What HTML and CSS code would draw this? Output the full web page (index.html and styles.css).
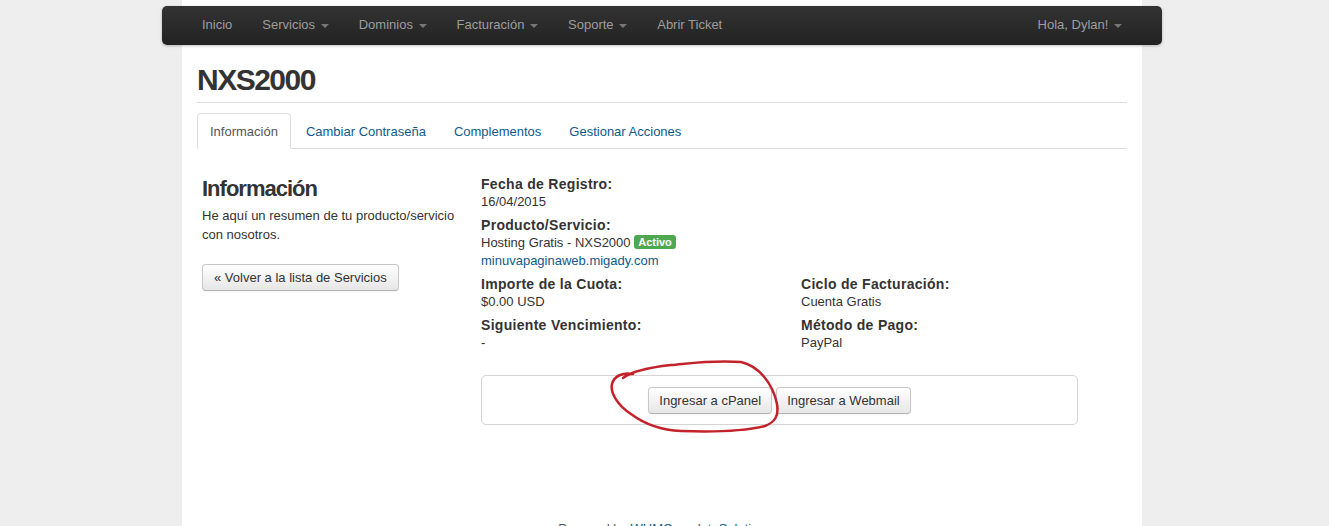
FILE: index.html
```html
<!DOCTYPE html>
<html>
<head>
    <meta charset="utf-8">
    <link rel="stylesheet" href="styles.css">
</head>
<body>
    <div class="page">
        <!-- Top Navigation -->
        <div class="navbar">
            <ul class="nav">
                <li><a href="#">Inicio</a></li>
                <li><a href="#">Servicios <span class="caret"></span></a></li>
                <li><a href="#">Dominios <span class="caret"></span></a></li>
                <li><a href="#">Facturación <span class="caret"></span></a></li>
                <li><a href="#">Soporte <span class="caret"></span></a></li>
                <li><a href="#">Abrir Ticket</a></li>
            </ul>
            <ul class="nav">
                <li><a href="#">Hola, Dylan! <span class="caret"></span></a></li>
            </ul>
        </div>

        <div class="content">
            <h1 class="page-title">NXS2000</h1>

            <!-- Tabs -->
            <ul class="tabs">
                <li class="active"><a href="#">Información</a></li>
                <li><a href="#">Cambiar Contraseña</a></li>
                <li><a href="#">Complementos</a></li>
                <li><a href="#">Gestionar Acciones</a></li>
            </ul>

            <div class="row">
                <div class="sidebar">
                    <h2>Información</h2>
                    <p>He aquí un resumen de tu producto/servicio con nosotros.</p>
                    <button class="btn">« Volver a la lista de Servicios</button>
                </div>

                <div class="details">
                    <div class="group">
                        <div class="label">Fecha de Registro:</div>
                        <div class="value">16/04/2015</div>
                    </div>
                    <div class="group">
                        <div class="label">Producto/Servicio:</div>
                        <div class="value">Hosting Gratis - NXS2000 <span class="badge">Activo</span></div>
                        <div class="value"><a href="#">minuvapaginaweb.migady.com</a></div>
                    </div>

                    <div class="cols">
                        <div>
                            <div class="group">
                                <div class="label">Importe de la Cuota:</div>
                                <div class="value">$0.00 USD</div>
                            </div>
                            <div class="group">
                                <div class="label">Siguiente Vencimiento:</div>
                                <div class="value">-</div>
                            </div>
                        </div>
                        <div>
                            <div class="group">
                                <div class="label">Ciclo de Facturación:</div>
                                <div class="value">Cuenta Gratis</div>
                            </div>
                            <div class="group">
                                <div class="label">Método de Pago:</div>
                                <div class="value">PayPal</div>
                            </div>
                        </div>
                    </div>

                    <!-- Login Buttons -->
                    <div class="well">
                        <button class="btn">Ingresar a cPanel</button>
                        <button class="btn">Ingresar a Webmail</button>
                        <svg class="scribble" width="170" height="74" viewBox="0 0 170 74">
                            <path d="M14 18 C24 10 44 7 62 5 C84 3 104 0 132 2 C150 6 164 24 168 44 C170 56 166 62 156 66 C136 71 100 72 72 71 C50 70 34 63 22 54 C8 45 1 32 3 24 C5 16 14 12 24 14"
                                  fill="none" stroke="#c3222b" stroke-width="2.5" stroke-linecap="round" />
                        </svg>
                    </div>
                </div>
            </div>
        </div>

        <div class="footer">Powered by <a href="#">WHMCompleteSolution</a></div>
    </div>
</body>
</html>
```

FILE: styles.css
```css
body {
    margin: 0;
    padding-right: 5px;
    background: #eeeeee;
    font-family: "Liberation Sans", Arial, sans-serif;
    font-size: 13px;
    color: #333;
}

a {
    color: #0f5a8c;
    text-decoration: none;
}

.page {
    width: 960px;
    margin: 0 auto;
    background: #ffffff;
    min-height: 560px;
    padding-top: 6px;
}

/* navbar */
.navbar {
    margin: 0 -20px;
    height: 39px;
    display: flex;
    justify-content: space-between;
    background: linear-gradient(#333333, #222222);
    border-radius: 5px;
    box-shadow: 0 1px 3px rgba(0, 0, 0, 0.25);
    padding: 0 25px;
}

.nav {
    list-style: none;
    margin: 0;
    padding: 0;
    display: flex;
}

.nav a {
    display: block;
    padding: 0 15px;
    line-height: 37px;
    color: #9d9d9d;
}

.caret {
    display: inline-block;
    width: 0;
    height: 0;
    margin-left: 2px;
    vertical-align: middle;
    border-top: 4px solid #777;
    border-left: 4px solid transparent;
    border-right: 4px solid transparent;
}

/* content */
.content {
    padding: 0 15px;
}

.page-title {
    margin: 0;
    padding: 17px 0 4px;
    font-size: 30px;
    letter-spacing: -1.5px;
    line-height: 36px;
    color: #333;
    border-bottom: 1px solid #ddd;
}

.tabs {
    list-style: none;
    margin: 10px 0 0;
    padding: 0;
    display: flex;
    border-bottom: 1px solid #ddd;
}

.tabs li {
    margin: 0 2px -1px 0;
}

.tabs a {
    display: block;
    padding: 8px 12px 6px;
    line-height: 20px;
    border: 1px solid transparent;
    border-radius: 4px 4px 0 0;
}

.tabs .active a {
    color: #555;
    background: #fff;
    border-color: #ddd #ddd transparent;
}

.row {
    display: flex;
    padding-top: 26px;
}

.sidebar {
    width: 279px;
    padding-left: 5px;
}

.sidebar h2 {
    margin: 0;
    font-size: 22px;
    letter-spacing: -1px;
    line-height: 28px;
}

.sidebar p {
    margin: 3px 0 20px;
    line-height: 19px;
    width: 255px;
}

.btn {
    font-family: "Liberation Sans", Arial, sans-serif;
    font-size: 13px;
    color: #333;
    height: 27px;
    padding: 0 11px;
    background: linear-gradient(#ffffff, #e6e6e6);
    border: 1px solid #c8c8c8;
    border-bottom-color: #b3b3b3;
    border-radius: 4px;
    box-shadow: inset 0 1px 0 rgba(255, 255, 255, 0.2), 0 1px 2px rgba(0, 0, 0, 0.05);
}

.details {
    width: 597px;
}

.group {
    margin-bottom: 5px;
}

.label {
    font-weight: bold;
    font-size: 14px;
    letter-spacing: 0.3px;
    line-height: 18px;
}

.value {
    line-height: 18px;
}

.badge {
    display: inline-block;
    background: #4fa84f;
    color: #fff;
    font-weight: bold;
    font-size: 11px;
    line-height: 14px;
    padding: 0 4px;
    border-radius: 3px;
    vertical-align: 1px;
}

.cols {
    display: grid;
    grid-template-columns: 320px 1fr;
}

.well {
    position: relative;
    margin-top: 18px;
    border: 1px solid #d4d4d4;
    border-radius: 5px;
    padding: 11px 0 10px;
    display: flex;
    justify-content: center;
    gap: 4px;
}

.well .btn {
    padding: 0 10px;
}

.scribble {
    position: absolute;
    left: 127px;
    top: -16px;
    overflow: visible;
}

.footer {
    margin-top: 96px;
    text-align: center;
    color: #555;
}
```
